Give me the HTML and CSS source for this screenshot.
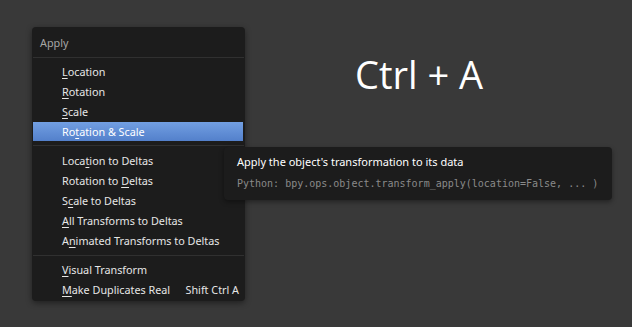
FILE: index.html
```html
<!DOCTYPE html>
<html lang="en">
<head>
  <meta charset="UTF-8">
  <title>Apply menu</title>
  <link rel="stylesheet" href="styles.css">
</head>
<body>

  <div class="stage">
    <div class="menu">
      <div class="menu-title">Apply</div>
      <div class="sep"></div>
      <div class="item"><span><u>L</u>ocation</span></div>
      <div class="item"><span><u>R</u>otation</span></div>
      <div class="item"><span><u>S</u>cale</span></div>
      <div class="item active"><span>Ro<u>t</u>ation &amp; Scale</span></div>
      <div class="sep wide"></div>
      <div class="item"><span>Loca<u>t</u>ion to Deltas</span></div>
      <div class="item"><span>Rotation to <u>D</u>eltas</span></div>
      <div class="item"><span>S<u>c</u>ale to Deltas</span></div>
      <div class="item"><span><u>A</u>ll Transforms to Deltas</span></div>
      <div class="item"><span>A<u>n</u>imated Transforms to Deltas</span></div>
      <div class="sep"></div>
      <div class="item"><span><u>V</u>isual Transform</span></div>
      <div class="item"><span><u>M</u>ake Duplicates Real</span><span class="key">Shift Ctrl A</span></div>
    </div>

    <div class="shortcut">Ctrl + A</div>

    <div class="tooltip">
      <div class="tip-text">Apply the object's transformation to its data</div>
      <div class="tip-python">Python: bpy.ops.object.transform_apply(location=False, ... )</div>
    </div>
  </div>

</body>
</html>
```

FILE: styles.css
```css
body {
  margin: 0;
  background: #393939;
  width: 632px;
  height: 327px;
  overflow: hidden;
  font-family: 'Noto Sans', 'DejaVu Sans', sans-serif;
}

.stage {
  position: relative;
  display: flex;
  align-items: flex-start;
  padding: 27px 0 0 32px;
}

.menu {
  width: 213px;
  background: #1c1c1c;
  border-radius: 4px;
  box-shadow: 0 2px 6px rgba(0, 0, 0, 0.45);
  padding: 0 0 1px;
  font-size: 10.8px;
  color: #e6e6e6;
}

.menu-title {
  height: 30px;
  line-height: 32px;
  padding-left: 8px;
  color: #a6a6a6;
}

.sep {
  height: 1px;
  background: #303030;
  margin: 0 1px 4px;
}

.item + .sep {
  margin-top: 4px;
}

.sep.wide {
  margin-bottom: 5px;
}

.item {
  height: 20px;
  line-height: 20px;
  padding: 0 6px 0 30px;
  display: flex;
  justify-content: space-between;
  white-space: nowrap;
}

.item u {
  text-decoration-thickness: 1px;
  text-underline-offset: 2px;
}

.item.active {
  margin: 0 2px 1px 1px;
  padding-left: 29px;
  height: 19px;
  line-height: 19px;
  background: linear-gradient(#729fe2, #5380cb);
  color: #ffffff;
}

.key {
  color: #e6e6e6;
}

.shortcut {
  margin: 21px 0 0 110px;
  font-family: 'Open Sans', sans-serif;
  font-size: 38px;
  line-height: 52px;
  color: #ffffff;
}

.tooltip {
  position: absolute;
  left: 224px;
  top: 147px;
  width: 388px;
  height: 53px;
  box-sizing: border-box;
  padding: 7px 10px 0 13px;
  background: #1c1c1c;
  border-radius: 4px;
  box-shadow: 0 2px 5px rgba(0, 0, 0, 0.4);
}

.tip-text {
  font-size: 11px;
  line-height: 16px;
  color: #ffffff;
}

.tip-python {
  margin-top: 7px;
  font-family: 'DejaVu Sans Mono', monospace;
  font-size: 10px;
  line-height: 14px;
  white-space: nowrap;
  color: #8a8a8a;
}
```
